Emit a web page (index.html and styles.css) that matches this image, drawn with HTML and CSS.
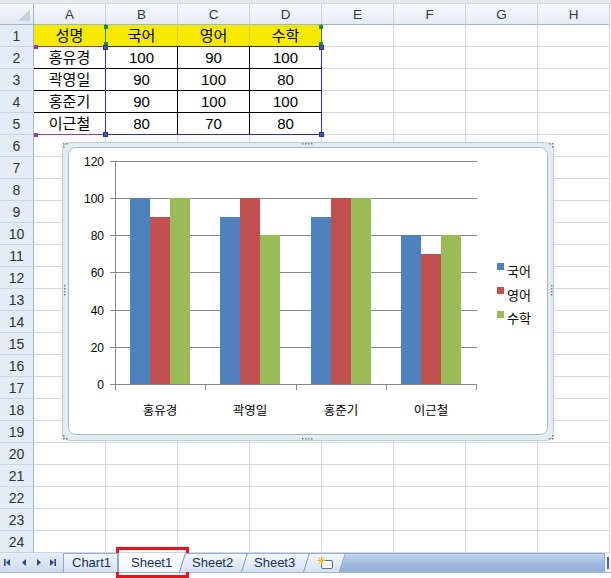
FILE: index.html
```html
<!DOCTYPE html>
<html lang="ko">
<head>
<meta charset="utf-8">
<title>Excel</title>
<link rel="stylesheet" href="styles.css">
</head>
<body>
<div class="app">
  <div class="topstrip"></div>
  <div class="sheet">
    <div class="corner"><span class="tri"></span></div>
    <div class="ch">A</div><div class="ch">B</div><div class="ch">C</div><div class="ch">D</div>
    <div class="ch">E</div><div class="ch">F</div><div class="ch">G</div><div class="ch">H</div>

    <div class="rh">1</div>
    <div class="c y">성명</div><div class="c y">국어</div><div class="c y">영어</div><div class="c y">수학</div>
    <div class="c"></div><div class="c"></div><div class="c"></div><div class="c"></div>

    <div class="rh">2</div>
    <div class="c b">홍유경</div><div class="c b">100</div><div class="c b">90</div><div class="c b">100</div>
    <div class="c"></div><div class="c"></div><div class="c"></div><div class="c"></div>

    <div class="rh">3</div>
    <div class="c b">곽영일</div><div class="c b">90</div><div class="c b">100</div><div class="c b">80</div>
    <div class="c"></div><div class="c"></div><div class="c"></div><div class="c"></div>

    <div class="rh">4</div>
    <div class="c b">홍준기</div><div class="c b">90</div><div class="c b">100</div><div class="c b">100</div>
    <div class="c"></div><div class="c"></div><div class="c"></div><div class="c"></div>

    <div class="rh">5</div>
    <div class="c b">이근철</div><div class="c b">80</div><div class="c b">70</div><div class="c b">80</div>
    <div class="c"></div><div class="c"></div><div class="c"></div><div class="c"></div>

    <div class="rh">6</div><div class="c"></div><div class="c"></div><div class="c"></div><div class="c"></div><div class="c"></div><div class="c"></div><div class="c"></div><div class="c"></div>
    <div class="rh">7</div><div class="c"></div><div class="c"></div><div class="c"></div><div class="c"></div><div class="c"></div><div class="c"></div><div class="c"></div><div class="c"></div>
    <div class="rh">8</div><div class="c"></div><div class="c"></div><div class="c"></div><div class="c"></div><div class="c"></div><div class="c"></div><div class="c"></div><div class="c"></div>
    <div class="rh">9</div><div class="c"></div><div class="c"></div><div class="c"></div><div class="c"></div><div class="c"></div><div class="c"></div><div class="c"></div><div class="c"></div>
    <div class="rh">10</div><div class="c"></div><div class="c"></div><div class="c"></div><div class="c"></div><div class="c"></div><div class="c"></div><div class="c"></div><div class="c"></div>
    <div class="rh">11</div><div class="c"></div><div class="c"></div><div class="c"></div><div class="c"></div><div class="c"></div><div class="c"></div><div class="c"></div><div class="c"></div>
    <div class="rh">12</div><div class="c"></div><div class="c"></div><div class="c"></div><div class="c"></div><div class="c"></div><div class="c"></div><div class="c"></div><div class="c"></div>
    <div class="rh">13</div><div class="c"></div><div class="c"></div><div class="c"></div><div class="c"></div><div class="c"></div><div class="c"></div><div class="c"></div><div class="c"></div>
    <div class="rh">14</div><div class="c"></div><div class="c"></div><div class="c"></div><div class="c"></div><div class="c"></div><div class="c"></div><div class="c"></div><div class="c"></div>
    <div class="rh">15</div><div class="c"></div><div class="c"></div><div class="c"></div><div class="c"></div><div class="c"></div><div class="c"></div><div class="c"></div><div class="c"></div>
    <div class="rh">16</div><div class="c"></div><div class="c"></div><div class="c"></div><div class="c"></div><div class="c"></div><div class="c"></div><div class="c"></div><div class="c"></div>
    <div class="rh">17</div><div class="c"></div><div class="c"></div><div class="c"></div><div class="c"></div><div class="c"></div><div class="c"></div><div class="c"></div><div class="c"></div>
    <div class="rh">18</div><div class="c"></div><div class="c"></div><div class="c"></div><div class="c"></div><div class="c"></div><div class="c"></div><div class="c"></div><div class="c"></div>
    <div class="rh">19</div><div class="c"></div><div class="c"></div><div class="c"></div><div class="c"></div><div class="c"></div><div class="c"></div><div class="c"></div><div class="c"></div>
    <div class="rh">20</div><div class="c"></div><div class="c"></div><div class="c"></div><div class="c"></div><div class="c"></div><div class="c"></div><div class="c"></div><div class="c"></div>
    <div class="rh">21</div><div class="c"></div><div class="c"></div><div class="c"></div><div class="c"></div><div class="c"></div><div class="c"></div><div class="c"></div><div class="c"></div>
    <div class="rh">22</div><div class="c"></div><div class="c"></div><div class="c"></div><div class="c"></div><div class="c"></div><div class="c"></div><div class="c"></div><div class="c"></div>
    <div class="rh">23</div><div class="c"></div><div class="c"></div><div class="c"></div><div class="c"></div><div class="c"></div><div class="c"></div><div class="c"></div><div class="c"></div>
    <div class="rh">24</div><div class="c"></div><div class="c"></div><div class="c"></div><div class="c"></div><div class="c"></div><div class="c"></div><div class="c"></div><div class="c"></div>
  </div>

  <div class="tabbar">
    <div class="nav">
      <svg width="63" height="19" viewBox="0 0 63 19">
        <g fill="#2b4a86">
          <rect x="4" y="6" width="1.6" height="7"/>
          <polygon points="10,6 10,13 6,9.5"/>
          <polygon points="26,6 26,13 22,9.5"/>
          <polygon points="37,6 37,13 41,9.5"/>
          <polygon points="50,6 50,13 54,9.5"/>
          <rect x="54.4" y="6" width="1.6" height="7"/>
        </g>
      </svg>
    </div>
    <div class="tab first">Chart1</div>
    <div class="tab active">Sheet1</div>
    <div class="tab t2">Sheet2</div>
    <div class="tab t3">Sheet3</div>
    <div class="tab newtab">
      <svg width="18" height="14" viewBox="0 0 18 14">
        <rect x="4.5" y="4.5" width="11" height="8" rx="1.5" fill="#fff" stroke="#5b6f8e"/>
        <g stroke="#f0a020" stroke-width="1">
          <line x1="4.5" y1="0.5" x2="4.5" y2="8.5"/>
          <line x1="0.5" y1="4.5" x2="8.5" y2="4.5"/>
          <line x1="1.7" y1="1.7" x2="7.3" y2="7.3"/>
          <line x1="7.3" y1="1.7" x2="1.7" y2="7.3"/>
        </g>
        <circle cx="4.5" cy="4.5" r="2" fill="#f7c23a"/>
      </svg>
    </div>
    <div class="hscroll"></div>
    <div class="split"><span></span></div>
  </div>

  <div class="rng rng-cat"></div>
  <div class="rng rng-ser"></div>
  <div class="rng rng-val"></div>
  <span class="hd hp" style="left:34px;top:45px"></span>
  <span class="hd hp" style="left:34px;top:133px"></span>
  <span class="hd hg" style="left:104px;top:25px"></span>
  <span class="hd hg" style="left:319px;top:25px"></span>
  <span class="hd hg" style="left:104px;top:42px"></span>
  <span class="hd hg" style="left:319px;top:42px"></span>
  <span class="hd hb" style="left:103px;top:45px"></span>
  <span class="hd hb" style="left:319px;top:45px"></span>
  <span class="hd hb" style="left:103px;top:132px"></span>
  <span class="hd hb" style="left:319px;top:132px"></span>

  <svg class="chart" width="494" height="300" viewBox="62 142 494 300">
    <rect x="62.5" y="142.5" width="491" height="298" rx="7" fill="#e2edf1" stroke="#bfcdd6"/>
    <rect x="68.5" y="147.5" width="479" height="287" rx="7" fill="#ffffff" stroke="#a9b9c4"/>
    <g fill="#707c86">
      <rect x="63" y="143" width="1.5" height="1.5"/><rect x="66" y="143" width="1.5" height="1.5"/><rect x="63" y="146" width="1.5" height="1.5"/>
      <rect x="549" y="143" width="1.5" height="1.5"/><rect x="552" y="143" width="1.5" height="1.5"/><rect x="552" y="146" width="1.5" height="1.5"/>
      <rect x="63" y="438" width="1.5" height="1.5"/><rect x="66" y="438" width="1.5" height="1.5"/><rect x="63" y="435" width="1.5" height="1.5"/>
      <rect x="549" y="438" width="1.5" height="1.5"/><rect x="552" y="438" width="1.5" height="1.5"/><rect x="552" y="435" width="1.5" height="1.5"/>
      <rect x="302" y="143" width="1.5" height="1.5"/><rect x="305" y="143" width="1.5" height="1.5"/><rect x="308" y="143" width="1.5" height="1.5"/><rect x="311" y="143" width="1.5" height="1.5"/>
      <rect x="302" y="438" width="1.5" height="1.5"/><rect x="305" y="438" width="1.5" height="1.5"/><rect x="308" y="438" width="1.5" height="1.5"/><rect x="311" y="438" width="1.5" height="1.5"/>
      <rect x="64" y="285" width="1.5" height="1.5"/><rect x="64" y="288" width="1.5" height="1.5"/><rect x="64" y="291" width="1.5" height="1.5"/><rect x="64" y="294" width="1.5" height="1.5"/>
      <rect x="551" y="285" width="1.5" height="1.5"/><rect x="551" y="288" width="1.5" height="1.5"/><rect x="551" y="291" width="1.5" height="1.5"/><rect x="551" y="294" width="1.5" height="1.5"/>
    </g>
    <g stroke="#878787" stroke-width="1">
      <line x1="110" y1="161.5" x2="477" y2="161.5"/>
      <line x1="110" y1="198.5" x2="477" y2="198.5"/>
      <line x1="110" y1="235.5" x2="477" y2="235.5"/>
      <line x1="110" y1="272.5" x2="477" y2="272.5"/>
      <line x1="110" y1="310.5" x2="477" y2="310.5"/>
      <line x1="110" y1="347.5" x2="477" y2="347.5"/>
    </g>
    <g>
      <rect x="130" y="198" width="20" height="186" fill="#4f81bd"/>
      <rect x="150" y="217" width="20" height="167" fill="#c0504d"/>
      <rect x="170" y="198" width="20" height="186" fill="#9bbb59"/>
      <rect x="220" y="217" width="20" height="167" fill="#4f81bd"/>
      <rect x="240" y="198" width="20" height="186" fill="#c0504d"/>
      <rect x="260" y="235" width="20" height="149" fill="#9bbb59"/>
      <rect x="311" y="217" width="20" height="167" fill="#4f81bd"/>
      <rect x="331" y="198" width="20" height="186" fill="#c0504d"/>
      <rect x="351" y="198" width="20" height="186" fill="#9bbb59"/>
      <rect x="401" y="235" width="20" height="149" fill="#4f81bd"/>
      <rect x="421" y="254" width="20" height="130" fill="#c0504d"/>
      <rect x="441" y="235" width="20" height="149" fill="#9bbb59"/>
    </g>
    <g stroke="#878787" stroke-width="1">
      <line x1="115.5" y1="161" x2="115.5" y2="390"/>
      <line x1="110" y1="384.5" x2="477" y2="384.5"/>
      <line x1="205.5" y1="384" x2="205.5" y2="390"/>
      <line x1="296.5" y1="384" x2="296.5" y2="390"/>
      <line x1="386.5" y1="384" x2="386.5" y2="390"/>
      <line x1="476.5" y1="384" x2="476.5" y2="390"/>
    </g>
    <g class="ylab" text-anchor="end">
      <text x="104" y="166">120</text>
      <text x="104" y="203">100</text>
      <text x="104" y="240">80</text>
      <text x="104" y="277">60</text>
      <text x="104" y="315">40</text>
      <text x="104" y="352">20</text>
      <text x="104" y="389">0</text>
    </g>
    <g class="xlab" text-anchor="middle">
      <text x="160" y="415">홍유경</text>
      <text x="250" y="415">곽영일</text>
      <text x="341" y="415">홍준기</text>
      <text x="431" y="415">이근철</text>
    </g>
    <rect x="497" y="263" width="7" height="7" fill="#4f81bd"/>
    <rect x="497" y="287" width="7" height="7" fill="#c0504d"/>
    <rect x="497" y="311" width="7" height="7" fill="#9bbb59"/>
    <g class="leg">
      <text x="507" y="276">국어</text>
      <text x="507" y="300">영어</text>
      <text x="507" y="323">수학</text>
    </g>
  </svg>

  <div class="mark"></div>
</div>
</body>
</html>
```

FILE: styles.css
```css
* { box-sizing: border-box; margin: 0; padding: 0; }
html, body { width: 611px; height: 578px; overflow: hidden; background: #fff; }
body {
  font-family: "Liberation Sans", "Noto Sans CJK KR", sans-serif;
  font-size: 15px;
  color: #000;
}
.app { position: relative; width: 611px; height: 578px; background: #fff; }

.topstrip { height: 4px; background: #e4e9ef; border-bottom: 1px solid #d3dbe5; }

.sheet {
  display: grid;
  grid-template-columns: 34px repeat(8, 72px);
  grid-template-rows: 21px repeat(24, 22px);
}
.corner {
  background: linear-gradient(#f5f8fb, #e2e9f2);
  border-right: 1px solid #9eb6ce;
  border-bottom: 1px solid #9eb6ce;
  display: flex;
  justify-content: flex-end;
  align-items: flex-end;
  padding: 0 3px 3px 0;
}
.tri {
  width: 0; height: 0;
  border-style: solid;
  border-width: 0 0 12px 12px;
  border-color: transparent transparent #c3d1e1 transparent;
}
.ch {
  background: linear-gradient(#f8fafd, #e4ebf4);
  border-right: 1px solid #c5d3e3;
  border-bottom: 1px solid #9eb6ce;
  display: flex; align-items: center; justify-content: center;
  font-size: 13.5px;
  color: #2f3a48;
}
.rh {
  background: #e4ecf7;
  border-right: 1px solid #9eb6ce;
  border-bottom: 1px solid #c9d6e6;
  display: flex; align-items: center; justify-content: center;
  font-size: 14px;
  color: #333;
}
.c {
  border-right: 1px solid #d0d7e5;
  border-bottom: 1px solid #d0d7e5;
  display: flex; align-items: center; justify-content: center;
  white-space: nowrap;
  line-height: 1;
}
.y { background: #f7ea00; border-right-color: #ddd040; border-bottom-color: #000; }
.b { border-right-color: #000; border-bottom-color: #000; }

/* chart data range highlight */
.rng { position: absolute; pointer-events: none; }
.rng-cat { left: 34px; top: 46px; width: 72px; height: 89px; border-top: 1px solid #9a3aa6; border-bottom: 1px solid #9a3aa6; }
.rng-ser { left: 105px; top: 24px; width: 217px; height: 23px; border-left: 1px solid #24893a; border-right: 1px solid #24893a; }
.rng-val { left: 105px; top: 46px; width: 217px; height: 89px; border: 1px solid #2a338f; }
.hd { position: absolute; width: 4px; height: 4px; }
.hp { background: #9a3aa6; }
.hg { background: #24893a; }
.hb { width: 5px; height: 5px; background: #3d58b8; border: 1px solid #2a338f; }

/* chart */
.chart { position: absolute; left: 62px; top: 142px; }
.ylab text { font-family: "Liberation Sans", sans-serif; font-size: 12px; fill: #000; }
.xlab text { font-family: "Noto Sans CJK KR", sans-serif; font-size: 12.5px; fill: #000; }
.leg text { font-family: "Noto Sans CJK KR", sans-serif; font-size: 13px; fill: #000; }

/* sheet tabs */
.tabbar {
  display: flex;
  height: 20px;
  background: linear-gradient(#e8eef7, #cfdbec);
  border-bottom: 1px solid #a3b7d3;
}
.nav { width: 63px; flex: none; display: flex; align-items: flex-start; }
.tab {
  position: relative;
  isolation: isolate;
  flex: none;
  height: 19px;
  display: flex;
  align-items: center;
  font-family: "Liberation Sans", sans-serif;
  font-size: 13px;
  color: #15305e;
  white-space: nowrap;
}
.tab::before {
  content: "";
  position: absolute;
  inset: 0;
  z-index: -1;
  background: linear-gradient(#f5f8fc, #d5e1f1);
  border-top: 1px solid #98b0d2;
  clip-path: polygon(6px 0, 100% 0, calc(100% - 6px) 100%, 0 100%);
}
.tab::after {
  content: "";
  position: absolute;
  right: 3px;
  top: 0;
  bottom: 0;
  width: 1px;
  background: #7b98c4;
  transform: skewX(-17.5deg);
}
.first { width: 55px; padding-left: 9px; z-index: 6; }
.first::before { clip-path: none; border-left: 1px solid #8ea9cf; border-right: 1px solid #8ea9cf; }
.first::after { display: none; }
.active { width: 68px; padding-left: 13px; z-index: 5; }
.active::before {
  background: linear-gradient(#ffffff, #eef3f9);
  border-top: none;
  border-left: 1px solid #8ea9cf;
  clip-path: polygon(0 0, 100% 0, calc(100% - 6px) 100%, 0 100%);
}
.t2 { width: 68px; margin-left: -6px; padding-left: 12px; z-index: 4; }
.t3 { width: 68px; margin-left: -6px; padding-left: 12px; z-index: 3; }
.newtab { width: 42px; margin-left: -6px; padding-left: 13px; z-index: 2; }
.hscroll {
  flex: 1;
  margin-left: -6px;
  height: 19px;
  background: linear-gradient(#c4d5ee, #9fb9df 55%, #93afd8);
  border-top: 1px solid #8ea9cf;
  clip-path: polygon(6px 0, 100% 0, 100% 100%, 0 100%);
}
.split {
  width: 7px;
  flex: none;
  height: 19px;
  background: #eef3fa;
  border-left: 1px solid #8ea9cf;
  display: flex;
  justify-content: center;
  align-items: center;
}
.split span { width: 2px; height: 12px; background: #55698a; }

.mark {
  position: absolute;
  left: 116px;
  top: 547px;
  width: 73px;
  height: 31px;
  border: 3px solid #e2141c;
}
```
